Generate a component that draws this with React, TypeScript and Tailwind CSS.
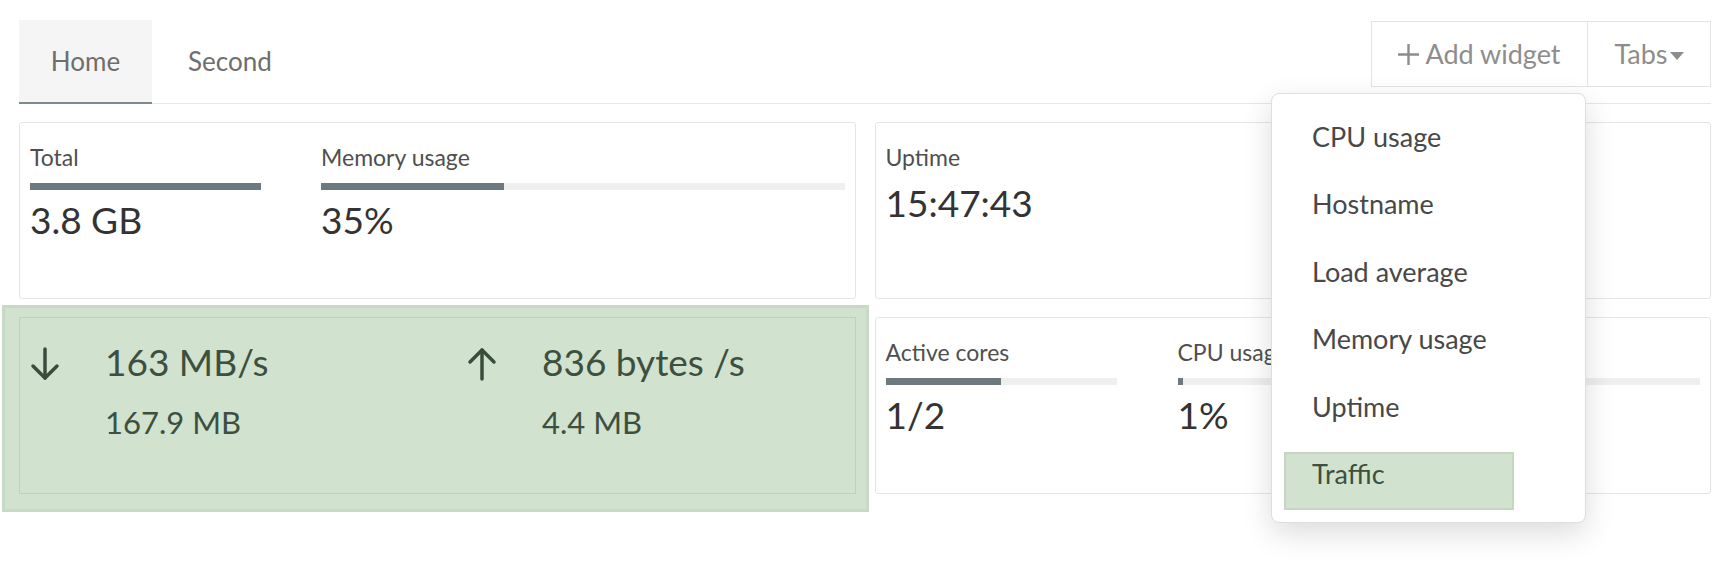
import React from "react"

const menuItems = ["CPU usage", "Hostname", "Load average", "Memory usage", "Uptime", "Traffic"]

function Bar({ pct }: { pct: number }) {
  return (
    <div className="h-[7px] w-full bg-[#efefef]">
      <div className="h-full bg-[#6c7a7f]" style={{ width: `${pct}%` }} />
    </div>
  )
}

function Metric({ label, value, pct, className = "" }: { label: string; value: string; pct: number; className?: string }) {
  return (
    <div className={className}>
      <div className="text-[23px] leading-[24px] text-[#4f4f4f]">{label}</div>
      <div className="mt-[14px]">
        <Bar pct={pct} />
      </div>
      <div className="mt-[10px] text-[37px] leading-[40px] text-[#333]">{value}</div>
    </div>
  )
}

function Card({ children }: { children: React.ReactNode }) {
  return <div className="h-[177px] rounded-[3px] border border-[#e3e6e8] bg-white px-[10px] pt-[22px]">{children}</div>
}

function Arrow({ up }: { up?: boolean }) {
  return (
    <svg width="30" height="34" viewBox="0 0 30 34" fill="none" stroke="#3a4d3c" strokeWidth="3.5" strokeLinecap="round" strokeLinejoin="round">
      {up ? (
        <>
          <path d="M15 3v29" />
          <path d="M3 15 15 3l12 12" />
        </>
      ) : (
        <>
          <path d="M15 2v29" />
          <path d="M3 19l12 12 12-12" />
        </>
      )}
    </svg>
  )
}

function TrafficStat({ up, rate, total }: { up?: boolean; rate: string; total: string }) {
  return (
    <div className="flex">
      <div className="w-[75px] pt-[4px]">
        <Arrow up={up} />
      </div>
      <div>
        <div className="text-[37px] leading-[38px]">{rate}</div>
        <div className="mt-[25px] text-[31px] leading-[32px]">{total}</div>
      </div>
    </div>
  )
}

function WidgetMenu() {
  return (
    <div className="absolute left-[-100px] top-[72px] z-10 w-[315px] rounded-[8px] border border-[#dedede] bg-white pb-[12px] pt-[20px] shadow-[0_10px_30px_rgba(0,0,0,0.14)]">
      <div className="flex flex-col gap-[9.5px]">
        {menuItems.map((item) =>
          item === "Traffic" ? (
            <div
              key={item}
              className="ml-[12px] flex h-[58px] w-[230px] items-center border-2 border-[#c3d7c1] bg-[#d1e2cf] pb-[12px] pl-[26px] text-[27px] text-[#3d503f]"
            >
              {item}
            </div>
          ) : (
            <div key={item} className="ml-[12px] flex h-[58px] w-[230px] items-center pb-[12px] pl-[28px] text-[27px] text-[#484848]">
              {item}
            </div>
          )
        )}
      </div>
    </div>
  )
}

export default function App() {
  return (
    <div className="min-h-screen bg-white pl-[19px] pr-[25px] pt-[20px] font-['Lato',sans-serif]">
      {/* Tab bar */}
      <div className="flex items-start justify-between border-b border-[#e4e7e8]">
        <div className="flex">
          <button className="-mb-px flex h-[84px] w-[133px] items-center justify-center border-b-2 border-[#7d8b8f] bg-[#f5f5f5] text-[26px] text-[#6e6e6e]">
            Home
          </button>
          <button className="flex h-[82px] items-center pl-[36px] pr-[32px] text-[26px] text-[#6e6e6e]">Second</button>
        </div>
        <div className="mt-px flex">
          <div className="relative">
            <button className="flex h-[66px] w-[217px] items-center justify-center gap-[6px] border border-[#e3e3e3] text-[27px] text-[#8d8d8d]">
              <svg width="21" height="21" viewBox="0 0 21 21" stroke="#8d8d8d" strokeWidth="2.4">
                <path d="M10.5 0v21M0 10.5h21" />
              </svg>
              Add widget
            </button>
            <WidgetMenu />
          </div>
          <button className="flex h-[66px] w-[123px] items-center justify-center border border-l-0 border-[#e3e3e3] text-[27px] text-[#8d8d8d]">
            Tabs
            <svg width="14" height="8" viewBox="0 0 14 8" className="ml-[2px] mt-[3px]">
              <path d="M0 0h14L7 8z" fill="#8d8d8d" />
            </svg>
          </button>
        </div>
      </div>

      {/* Widgets */}
      <div className="mt-[18px] grid grid-cols-2 gap-x-[19px] gap-y-[18px]">
        <Card>
          <div className="flex gap-[60px]">
            <Metric className="w-[231px]" label="Total" value="3.8 GB" pct={100} />
            <Metric className="flex-1" label="Memory usage" value="35%" pct={35} />
          </div>
        </Card>
        <Card>
          <div className="text-[23px] leading-[24px] text-[#4f4f4f]">Uptime</div>
          <div className="mt-[14px] text-[37px] leading-[40px] text-[#333]">15:47:43</div>
        </Card>
        <div className="h-[177px] border border-[#bdd1bb] bg-[#d1e2cf] pl-[10px] pt-[25px] text-[#3d503f] shadow-[-2px_3px_0_12px_#d1e2cf,-2px_3px_0_15px_#c7dac5]">
          <div className="grid grid-cols-[437px_1fr]">
            <TrafficStat rate="163 MB/s" total="167.9 MB" />
            <TrafficStat up rate="836 bytes /s" total="4.4 MB" />
          </div>
        </div>
        <Card>
          <div className="flex gap-[61px]">
            <Metric className="w-[231px]" label="Active cores" value="1/2" pct={50} />
            <Metric className="flex-1" label="CPU usage" value="1%" pct={1} />
          </div>
        </Card>
      </div>
    </div>
  )
}
